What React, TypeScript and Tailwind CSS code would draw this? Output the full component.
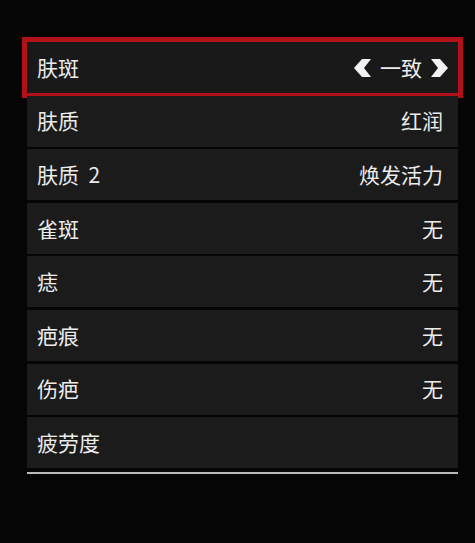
import React from 'react'

const ROWS: { label: string; value?: string }[] = [
  { label: '肤斑', value: '一致' },
  { label: '肤质', value: '红润' },
  { label: '肤质  2', value: '焕发活力' },
  { label: '雀斑', value: '无' },
  { label: '痣', value: '无' },
  { label: '疤痕', value: '无' },
  { label: '伤疤', value: '无' },
  { label: '疲劳度' },
]

function Chevron({ dir }: { dir: 'left' | 'right' }) {
  return (
    <svg width="17" height="18" viewBox="0 0 17 18" className="shrink-0">
      {dir === 'left' ? (
        <polygon points="8,0 17,0 10,9 17,18 8,18 0,9" fill="#f2f2f2" />
      ) : (
        <polygon points="9,0 0,0 7,9 0,18 9,18 17,9" fill="#f2f2f2" />
      )}
    </svg>
  )
}

export default function App() {
  return (
    <div
      className="w-[475px] h-[543px] bg-[#050505] overflow-hidden pt-[42px]"
      style={{ fontFamily: '"Noto Sans CJK SC", "Noto Sans", sans-serif' }}
    >
      <div className="ml-[27px] w-[431px] flex flex-col gap-[2.6px]">
        {ROWS.map((row, i) =>
          i === 0 ? (
            <div
              key={i}
              className="h-[51px] flex items-center justify-between pl-[10px] pr-[10px] bg-[#191919] text-[21px] text-[#ececec] ring-[5px] ring-[#b11219]"
            >
              <span>{row.label}</span>
              <span className="flex items-center gap-[9px]">
                <Chevron dir="left" />
                <span>{row.value}</span>
                <Chevron dir="right" />
              </span>
            </div>
          ) : (
            <div
              key={i}
              className="h-[51px] flex items-center justify-between pl-[10px] pr-[15px] bg-[#1b1b1b] text-[21px] text-[#ececec]"
            >
              <span className="whitespace-pre">{row.label}</span>
              <span>{row.value}</span>
            </div>
          )
        )}
        <div className="h-[2px] bg-[#b9b9b9] mt-[1px]" />
      </div>
    </div>
  )
}
